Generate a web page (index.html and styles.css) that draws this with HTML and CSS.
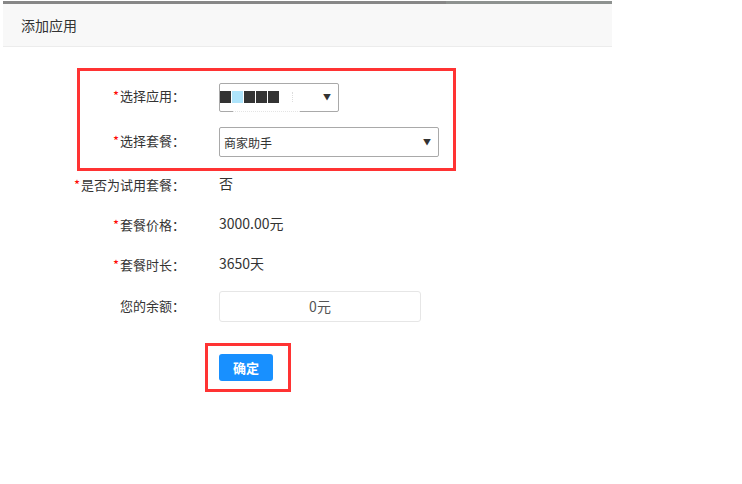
FILE: index.html
```html
<!DOCTYPE html>
<html lang="zh-CN">
<head>
    <meta charset="UTF-8">
    <meta name="viewport" content="width=device-width, initial-scale=1.0">
    <title>添加应用</title>
    <link rel="stylesheet" href="styles.css">
</head>
<body>
    <div class="pagina">
        <div class="barra-topo"></div>

        <!-- Cabeçalho -->
        <div class="cabecalho">添加应用</div>

        <!-- Formulário -->
        <div class="formulario">
            <div class="linha linha-select">
                <label class="rotulo"><span class="obrigatorio">*</span>选择应用：</label>
                <div class="caixa-select caixa-app">
                    <span class="bloco"></span><span class="bloco bloco-claro"></span><span class="bloco"></span><span class="bloco"></span><span class="bloco"></span>
                    <span class="pontos"></span>
                    <span class="seta">&#9660;</span>
                    <span class="corte"></span>
                </div>
            </div>

            <div class="linha linha-select segunda">
                <label class="rotulo"><span class="obrigatorio">*</span>选择套餐：</label>
                <div class="caixa-select caixa-plano">
                    <span class="texto-select">商家助手</span>
                    <span class="seta">&#9660;</span>
                </div>
            </div>

            <div class="linha linha-texto primeira-texto">
                <label class="rotulo"><span class="obrigatorio">*</span>是否为试用套餐：</label>
                <div class="valor">否</div>
            </div>

            <div class="linha linha-texto">
                <label class="rotulo"><span class="obrigatorio">*</span>套餐价格：</label>
                <div class="valor">3000.00元</div>
            </div>

            <div class="linha linha-texto">
                <label class="rotulo"><span class="obrigatorio">*</span>套餐时长：</label>
                <div class="valor">3650天</div>
            </div>

            <div class="linha linha-saldo">
                <label class="rotulo">您的余额：</label>
                <div class="saldo">0元</div>
            </div>

            <div class="linha linha-botao">
                <button class="botao-confirmar">确定</button>
            </div>
        </div>
    </div>

    <!-- Marcações vermelhas -->
    <div class="marca marca-selects"></div>
    <div class="marca marca-botao"></div>
</body>
</html>
```

FILE: styles.css
```css
* {
    margin: 0;
    padding: 0;
    box-sizing: border-box;
}

body {
    font-family: "Microsoft YaHei", "Noto Sans CJK SC", sans-serif;
    background-color: #fff;
    color: #333;
    width: 742px;
    height: 484px;
    overflow: hidden;
    position: relative;
}

.pagina {
    margin-top: 1px;
    margin-left: 3px;
    width: 609px;
}

.barra-topo {
    height: 3px;
    background: linear-gradient(to right, #878787 0, #878787 443px, #8e9290 443px, #8e9290 100%);
}

.cabecalho {
    height: 43px;
    background-color: #f8f8f8;
    border-bottom: 1px solid #ececec;
    padding-left: 18px;
    font-size: 14px;
    line-height: 42px;
    color: #333;
}

.formulario {
    padding-top: 35px;
}

.linha {
    display: flex;
    align-items: center;
}

.rotulo {
    width: 182px;
    margin-right: 34px;
    text-align: right;
    font-size: 13px;
    color: #333;
    white-space: nowrap;
}

.obrigatorio {
    color: #f00;
    margin-right: 1px;
}

.linha-select {
    height: 30px;
}

.linha-select .rotulo,
.linha-saldo .rotulo {
    padding-bottom: 3px;
}

.segunda {
    margin-top: 15px;
}

.caixa-select {
    position: relative;
    height: 30px;
    border: 1px solid #a9a9a9;
    border-radius: 2px;
    display: flex;
    align-items: center;
}

.caixa-app {
    width: 120px;
    height: 29px;
    padding-left: 0;
}

.caixa-plano {
    width: 220px;
    padding-left: 4px;
}

.bloco {
    display: inline-block;
    width: 11px;
    height: 12px;
    margin-right: 1px;
    background-color: #333;
}

.bloco-claro {
    background-color: #aee4fb;
}

.pontos {
    display: inline-block;
    width: 1px;
    height: 10px;
    margin-left: 12px;
    border-left: 1px dotted #ddd;
}

.corte {
    position: absolute;
    left: 13px;
    bottom: -1px;
    width: 67px;
    height: 2px;
    background-color: #fff;
    border-bottom: 1px dotted #e4e4e4;
}

.texto-select {
    font-size: 12px;
    color: #333;
}

.seta {
    position: absolute;
    right: 7px;
    top: 50%;
    transform: translateY(-50%);
    font-size: 8px;
    color: #333;
    line-height: 1;
}

.linha-texto {
    height: 20px;
    margin-top: 20px;
}

.primeira-texto {
    margin-top: 18px;
}

.linha-texto .rotulo {
    line-height: 20px;
    margin-top: -1px;
}

.valor {
    font-size: 14px;
    line-height: 20px;
    margin-top: -5px;
    color: #333;
}

.linha-saldo {
    height: 31px;
    margin-top: 16px;
}

.saldo {
    width: 202px;
    height: 31px;
    border: 1px solid #e6e6e6;
    border-radius: 3px;
    text-align: center;
    line-height: 28px;
    font-size: 14px;
    color: #555;
}

.linha-botao {
    margin-top: 32px;
    padding-left: 216px;
}

.botao-confirmar {
    width: 54px;
    height: 27px;
    background-color: #1890ff;
    color: #fff;
    border: none;
    border-radius: 3px;
    font-family: "Microsoft YaHei", "Noto Sans CJK SC", sans-serif;
    font-size: 13px;
    font-weight: 600;
    line-height: 25px;
    cursor: pointer;
}

.marca {
    position: absolute;
    border: 3px solid #f33;
}

.marca-selects {
    left: 77px;
    top: 68px;
    width: 379px;
    height: 103px;
}

.marca-botao {
    left: 205px;
    top: 343px;
    width: 86px;
    height: 49px;
}
```
